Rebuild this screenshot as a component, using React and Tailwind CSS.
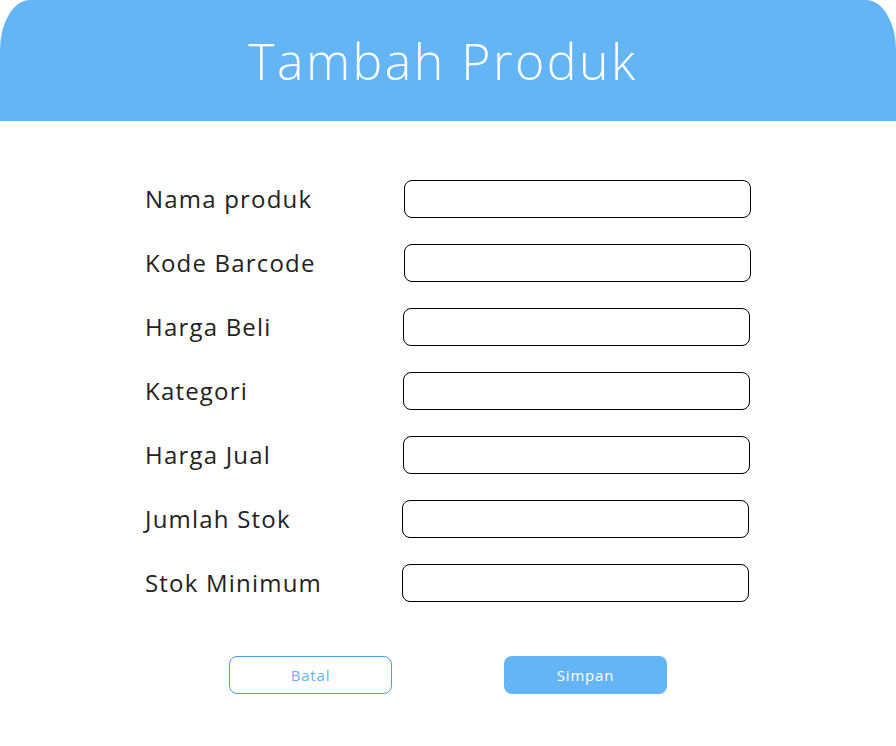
const fields = [
  { label: 'Nama produk', shift: 'ml-0' },
  { label: 'Kode Barcode', shift: 'ml-0' },
  { label: 'Harga Beli', shift: '-ml-px' },
  { label: 'Kategori', shift: '-ml-px' },
  { label: 'Harga Jual', shift: '-ml-px' },
  { label: 'Jumlah Stok', shift: '-ml-[2px]' },
  { label: 'Stok Minimum', shift: '-ml-[2px]' },
];

export default function App() {
  return (
    <div className="w-[896px] h-[746px] bg-white font-['Open_Sans',sans-serif]">
      <div className="h-[121px] bg-[#64b5f6] rounded-t-[30px_50px] flex items-center justify-center pr-[10px]">
        <h1 className="text-white text-[50px] font-light tracking-[2.5px] leading-none">Tambah Produk</h1>
      </div>

      <div className="pt-[59px] pl-[145px] flex flex-col gap-[26px]">
        {fields.map(({ label, shift }) => (
          <div key={label} className="flex items-center">
            <label className="w-[259px] text-[24px] tracking-[1.2px] text-[#222] leading-none">{label}</label>
            <input
              type="text"
              className={`${shift} w-[347px] h-[38px] border border-black rounded-[8px] px-3 outline-none`}
            />
          </div>
        ))}
      </div>

      <div className="flex gap-[112px] pl-[229px] pt-[54px]">
        <button className="w-[163px] h-[38px] border border-[#4a9de0] rounded-[8px] text-[15px] tracking-[0.8px] text-[#64b5f6]">
          Batal
        </button>
        <button className="w-[163px] h-[38px] bg-[#64b5f6] rounded-[8px] text-[15px] tracking-[0.8px] text-white">
          Simpan
        </button>
      </div>
    </div>
  );
}
